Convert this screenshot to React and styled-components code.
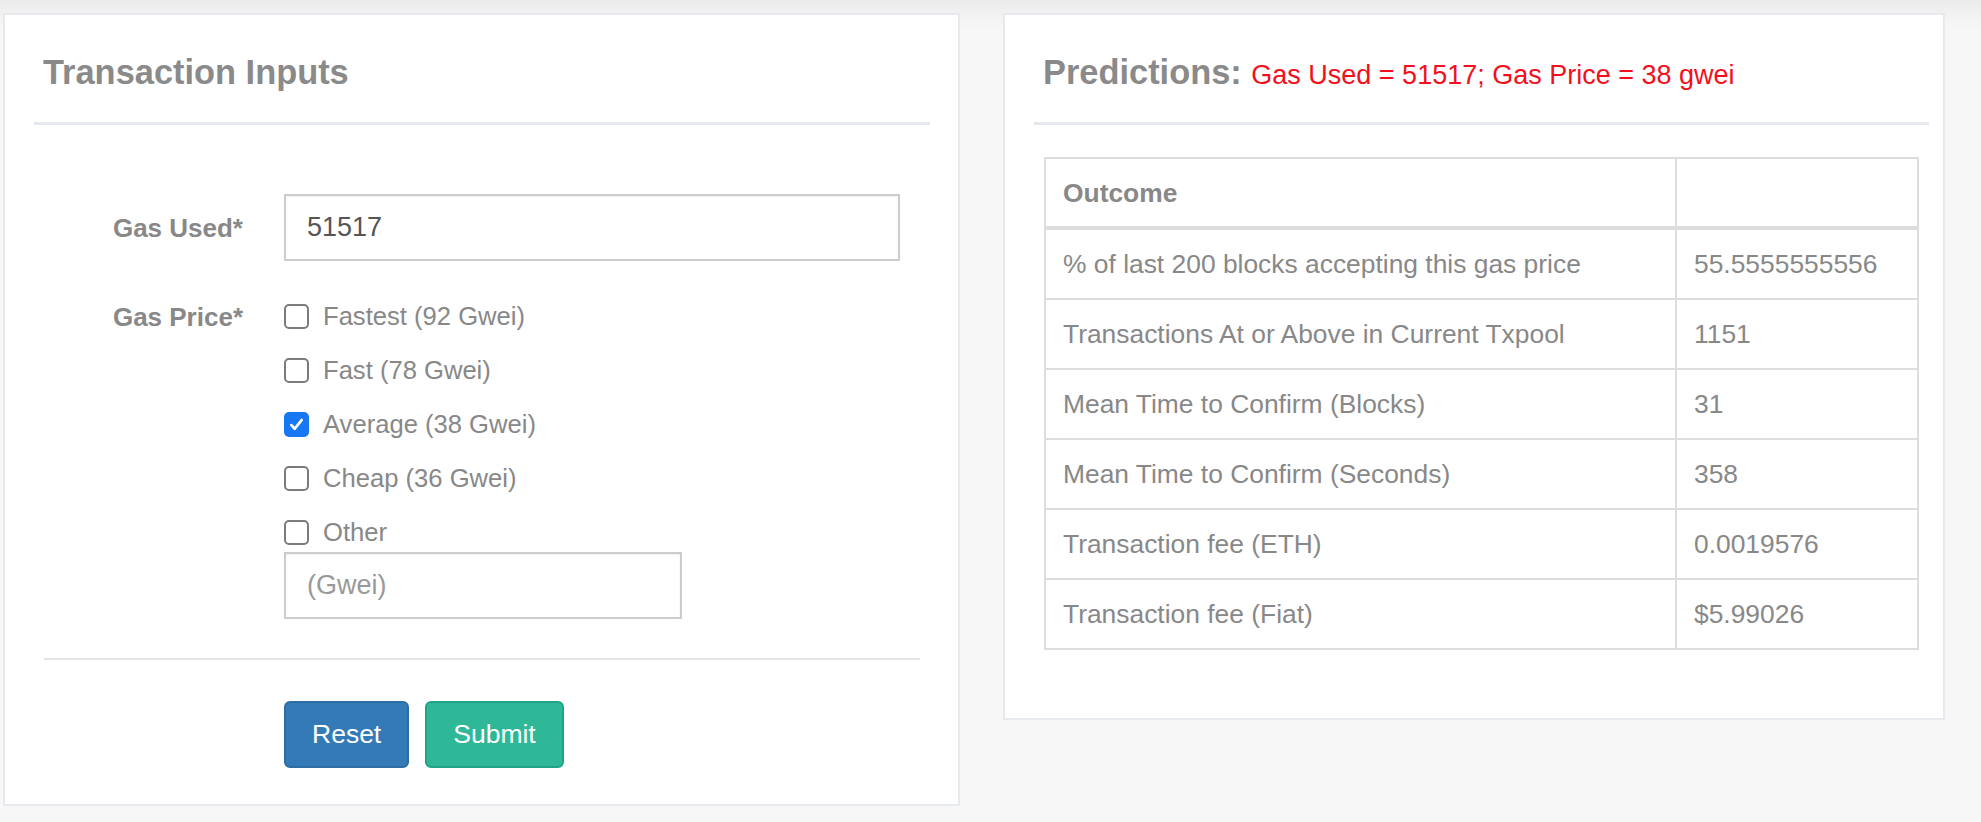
import React from "react";
import styled, { createGlobalStyle } from "styled-components";

const GlobalStyle = createGlobalStyle`
  html, body {
    margin: 0;
    padding: 0;
  }
  body {
    background: #f7f7f7;
    font-family: "Liberation Sans", Arial, Helvetica, sans-serif;
    color: #888;
  }
`;

const Page = styled.div`
  min-height: 822px;
  box-sizing: border-box;
  padding: 13px 0 0 3px;
  display: flex;
  align-items: flex-start;
  gap: 43px;
  background: linear-gradient(#ececec, #f7f7f7 28px);
`;

const Panel = styled.section`
  box-sizing: border-box;
  flex-shrink: 0;
  width: ${(p) => p.$width}px;
  background: #fff;
  border: 2px solid #e6e9ed;
  padding: ${(p) => p.$padding};
`;

const PanelHeader = styled.div`
  padding: 37px 9px 30px;
  border-bottom: 3px solid #e6e9ed;
`;

const Title = styled.h2`
  margin: 0;
  font-size: 34.4px;
  line-height: 40px;
  font-weight: bold;
  color: #8a8a8a;
  white-space: nowrap;
`;

const Note = styled.small`
  font-size: 27px;
  line-height: 1;
  font-weight: normal;
  color: #f2101c;
`;

/* ---- form ---- */

const Form = styled.form`
  margin-top: 69px;
`;

const FormRow = styled.div`
  display: grid;
  grid-template-columns: 209px 1fr;
  column-gap: 41px;
  margin-top: ${(p) => p.$gap || 0}px;
`;

const Label = styled.label`
  text-align: right;
  font-size: 26px;
  line-height: 36px;
  font-weight: bold;
  color: #888;
  padding-top: ${(p) => p.$top || 0}px;
`;

const TextInput = styled.input`
  box-sizing: border-box;
  width: ${(p) => p.$width}px;
  height: 67px;
  margin-top: ${(p) => p.$top || 0}px;
  padding: 0 21px;
  border: 2px solid #ccc;
  border-radius: 0;
  box-shadow: inset 0 1px 2px rgba(0, 0, 0, 0.07);
  font-family: inherit;
  font-size: 27px;
  color: #555;
  outline: none;
  &::placeholder {
    color: #999;
  }
`;

const Options = styled.div`
  display: flex;
  flex-direction: column;
`;

const CheckRow = styled.label`
  display: flex;
  align-items: center;
  gap: 14px;
  height: 36px;
  margin-bottom: 18px;
  font-size: 25.6px;
  color: #888;
  &:last-of-type {
    margin-bottom: 0;
  }
`;

const Box = styled.span`
  box-sizing: border-box;
  flex-shrink: 0;
  width: 25px;
  height: 25px;
  border-radius: 5px;
  border: ${(p) => (p.$checked ? "none" : "2px solid #7b7b7b")};
  background: ${(p) => (p.$checked ? "#1877f2" : "#fff")};
  display: inline-flex;
  align-items: center;
  justify-content: center;
`;

const Divider = styled.div`
  height: 2px;
  background: #e5e5e5;
  margin: 39px 10px 0;
`;

const Actions = styled.div`
  display: flex;
  gap: 16px;
`;

const Button = styled.button`
  box-sizing: border-box;
  height: 67px;
  padding: 0 26px;
  border-radius: 6px;
  border: 2px solid ${(p) => (p.$kind === "success" ? "#1fa487" : "#2e6da4")};
  background: ${(p) => (p.$kind === "success" ? "#2fb898" : "#337ab7")};
  color: #fff;
  font-family: inherit;
  font-size: 26.5px;
  cursor: pointer;
`;

/* ---- table ---- */

const Table = styled.table`
  margin: 32px 10px 0;
  width: calc(100% - 20px);
  border-collapse: collapse;
  table-layout: fixed;
  font-size: 26.4px;
  line-height: 36px;
  color: #888;
`;

const Col = styled.col`
  width: ${(p) => p.$width}px;
`;

const Th = styled.th`
  text-align: left;
  font-weight: bold;
  padding: 16px 17px 15px;
  border: 2px solid #ddd;
  border-bottom-width: 4px;
`;

const Td = styled.td`
  padding: 16px 17px;
  border: 2px solid #ddd;
  white-space: nowrap;
`;

const Check = ({ checked, children }) => (
  <CheckRow>
    <Box $checked={checked}>
      {checked && (
        <svg width="17" height="17" viewBox="0 0 16 16">
          <path d="M3.2 8.6l3.1 3.4L12.8 3.8" fill="none" stroke="#fff" strokeWidth="2.6" strokeLinecap="round" strokeLinejoin="round" />
        </svg>
      )}
    </Box>
    {children}
  </CheckRow>
);

const prices = [
  { label: "Fastest (92 Gwei)" },
  { label: "Fast (78 Gwei)" },
  { label: "Average (38 Gwei)", checked: true },
  { label: "Cheap (36 Gwei)" },
  { label: "Other" },
];

const rows = [
  ["% of last 200 blocks accepting this gas price", "55.5555555556"],
  ["Transactions At or Above in Current Txpool", "1151"],
  ["Mean Time to Confirm (Blocks)", "31"],
  ["Mean Time to Confirm (Seconds)", "358"],
  ["Transaction fee (ETH)", "0.0019576"],
  ["Transaction fee (Fiat)", "$5.99026"],
];

export default function App() {
  return (
    <>
      <GlobalStyle />
      <Page>
        <Panel $width={957} $padding="0 28px 36px 29px">
          <PanelHeader>
            <Title>Transaction Inputs</Title>
          </PanelHeader>
          <Form onSubmit={(e) => e.preventDefault()}>
            <FormRow>
              <Label $top={16}>Gas Used*</Label>
              <TextInput $width={616} defaultValue="51517" />
            </FormRow>
            <FormRow $gap={37}>
              <Label $top={1}>Gas Price*</Label>
              <div>
                <Options>
                  {prices.map((p) => (
                    <Check key={p.label} checked={p.checked}>
                      {p.label}
                    </Check>
                  ))}
                </Options>
                <TextInput $width={398} $top={2} placeholder="(Gwei)" />
              </div>
            </FormRow>
            <Divider />
            <FormRow $gap={41}>
              <span />
              <Actions>
                <Button type="button">Reset</Button>
                <Button type="submit" $kind="success">Submit</Button>
              </Actions>
            </FormRow>
          </Form>
        </Panel>

        <Panel $width={942} $padding="0 14px 68px 29px">
          <PanelHeader>
            <Title>
              Predictions: <Note>Gas Used = 51517; Gas Price = 38 gwei</Note>
            </Title>
          </PanelHeader>
          <Table>
            <colgroup>
              <Col $width={631} />
              <Col />
            </colgroup>
            <thead>
              <tr>
                <Th>Outcome</Th>
                <Th />
              </tr>
            </thead>
            <tbody>
              {rows.map(([k, v]) => (
                <tr key={k}>
                  <Td>{k}</Td>
                  <Td>{v}</Td>
                </tr>
              ))}
            </tbody>
          </Table>
        </Panel>
      </Page>
    </>
  );
}
